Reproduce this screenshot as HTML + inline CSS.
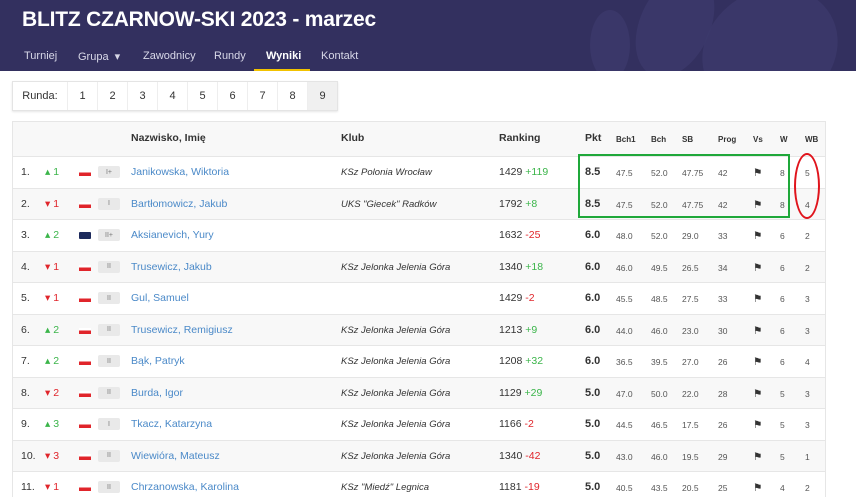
<!DOCTYPE html>
<html><head><meta charset="utf-8"><style>
*{margin:0;padding:0;box-sizing:border-box}
body{width:856px;height:497px;overflow:hidden;background:#fff;font-family:"Liberation Sans",sans-serif;color:#333;position:relative}
.hdr{position:absolute;left:0;top:0;width:856px;height:71px;background:#33305f;overflow:hidden}
.blob{position:absolute;border-radius:50%;background:#3c3a6c;opacity:.8}
.title{position:absolute;left:22px;top:8px;color:#fff;font-size:21px;font-weight:bold;letter-spacing:-.2px}
.nav{position:absolute;top:50px;color:#d8d8e8;font-size:11px}
.nav.a{color:#fff;font-weight:bold}
.ul{position:absolute;left:254px;top:69px;width:56px;height:2px;background:#f2c200}
.runda{position:absolute;left:12px;top:81px;height:30px;border:1px solid #e4e4e4;box-shadow:0 1px 2px rgba(0,0,0,.1);display:flex;font-size:11px}
.runda div{width:30px;border-left:1px solid #eee;text-align:center;line-height:28px}
.runda div:first-child{width:54px;border:none}
.tbl{position:absolute;left:12px;top:121px;width:814px;height:376px;border:1px solid #e6e6e6;border-bottom:none}
.row{position:absolute;left:0;width:812px;height:31.5px;border-top:1px solid #e6e6e6;font-size:10.5px}
.row.g{background:#f8f8f8}
.row span{position:absolute;top:9px;white-space:nowrap}
.h{background:#f8f8f8;height:34px;border:none;font-weight:bold;font-size:10.5px}
.h span{top:10px}
.h .s{font-size:8px;top:13px}
.up{color:#3bb54a}.dn{color:#e0252b}
.fl{width:12px;height:6px;top:13px!important;background:linear-gradient(#fff 40%,#e0252b 40%)}
.by{width:12px;height:7px;top:12px!important;background:#1d2a5c;border-radius:1px}
.row .bd{width:22px;height:12px;top:9px;background:#e9e9e9;border-radius:2px;font-size:7px;color:#777;display:flex;align-items:center;justify-content:center;line-height:1}
.nm{color:#4a89c8}
.cl{font-style:italic;font-size:9.5px!important;top:10px!important}
.pk{font-weight:bold;font-size:11px}
.sm{font-size:8.5px!important;color:#555;top:11px!important}
.flag{width:8px;height:8px;top:10px!important}
</style></head><body>
<div class="hdr">
<div class="blob" style="left:640px;top:-30px;width:70px;height:110px;transform:rotate(25deg)"></div>
<div class="blob" style="left:700px;top:-10px;width:140px;height:120px;transform:rotate(-30deg)"></div>
<div class="blob" style="left:590px;top:10px;width:40px;height:70px"></div>
<div class="title">BLITZ CZARNOW-SKI 2023 - marzec</div>
<span class="nav" style="left:24px">Turniej</span>
<span class="nav" style="left:78px">Grupa &nbsp;▾</span>
<span class="nav" style="left:143px">Zawodnicy</span>
<span class="nav" style="left:214px">Rundy</span>
<span class="nav a" style="left:266px">Wyniki</span>
<span class="nav" style="left:321px">Kontakt</span>
<div class="ul"></div>
</div>
<div class="runda"><div>Runda:</div><div>1</div><div>2</div><div>3</div><div>4</div><div>5</div><div>6</div><div>7</div><div>8</div><div style="background:#f0f0f0">9</div></div>
<div class="tbl">
<div class="row h" style="top:0"><span style="left:118px">Nazwisko, Imię</span><span style="left:328px">Klub</span><span style="left:486px">Ranking</span><span style="left:572px">Pkt</span><span class="s" style="left:603px">Bch1</span><span class="s" style="left:638px">Bch</span><span class="s" style="left:669px">SB</span><span class="s" style="left:705px">Prog</span><span class="s" style="left:740px">Vs</span><span class="s" style="left:767px">W</span><span class="s" style="left:792px">WB</span></div>

<div class="row" style="top:34px"><span style="left:8px">1.</span><span class="up" style="left:32px">▴ 1</span><span class="fl" style="left:66px"></span><span class="bd" style="left:85px">I+</span><span class="nm" style="left:118px">Janikowska, Wiktoria</span><span class="cl" style="left:328px">KSz Polonia Wrocław</span><span style="left:486px">1429 <b class="up" style="font-weight:normal">+119</b></span><span class="pk" style="left:572px">8.5</span><span class="sm" style="left:603px">47.5</span><span class="sm" style="left:638px">52.0</span><span class="sm" style="left:669px">47.75</span><span class="sm" style="left:705px">42</span><span class="flag" style="left:740px">⚑</span><span class="sm" style="left:767px">8</span><span class="sm" style="left:792px">5</span></div>
<div class="row g" style="top:65.5px"><span style="left:8px">2.</span><span class="dn" style="left:32px">▾ 1</span><span class="fl" style="left:66px"></span><span class="bd" style="left:85px">I</span><span class="nm" style="left:118px">Bartłomowicz, Jakub</span><span class="cl" style="left:328px">UKS "Giecek" Radków</span><span style="left:486px">1792 <b class="up" style="font-weight:normal">+8</b></span><span class="pk" style="left:572px">8.5</span><span class="sm" style="left:603px">47.5</span><span class="sm" style="left:638px">52.0</span><span class="sm" style="left:669px">47.75</span><span class="sm" style="left:705px">42</span><span class="flag" style="left:740px">⚑</span><span class="sm" style="left:767px">8</span><span class="sm" style="left:792px">4</span></div>
<div class="row" style="top:97px"><span style="left:8px">3.</span><span class="up" style="left:32px">▴ 2</span><span class="by" style="left:66px"></span><span class="bd" style="left:85px">II+</span><span class="nm" style="left:118px">Aksianevich, Yury</span><span style="left:486px">1632 <b class="dn" style="font-weight:normal">-25</b></span><span class="pk" style="left:572px">6.0</span><span class="sm" style="left:603px">48.0</span><span class="sm" style="left:638px">52.0</span><span class="sm" style="left:669px">29.0</span><span class="sm" style="left:705px">33</span><span class="flag" style="left:740px">⚑</span><span class="sm" style="left:767px">6</span><span class="sm" style="left:792px">2</span></div>
<div class="row g" style="top:128.5px"><span style="left:8px">4.</span><span class="dn" style="left:32px">▾ 1</span><span class="fl" style="left:66px"></span><span class="bd" style="left:85px">II</span><span class="nm" style="left:118px">Trusewicz, Jakub</span><span class="cl" style="left:328px">KSz Jelonka Jelenia Góra</span><span style="left:486px">1340 <b class="up" style="font-weight:normal">+18</b></span><span class="pk" style="left:572px">6.0</span><span class="sm" style="left:603px">46.0</span><span class="sm" style="left:638px">49.5</span><span class="sm" style="left:669px">26.5</span><span class="sm" style="left:705px">34</span><span class="flag" style="left:740px">⚑</span><span class="sm" style="left:767px">6</span><span class="sm" style="left:792px">2</span></div>
<div class="row" style="top:160px"><span style="left:8px">5.</span><span class="dn" style="left:32px">▾ 1</span><span class="fl" style="left:66px"></span><span class="bd" style="left:85px">II</span><span class="nm" style="left:118px">Gul, Samuel</span><span style="left:486px">1429 <b class="dn" style="font-weight:normal">-2</b></span><span class="pk" style="left:572px">6.0</span><span class="sm" style="left:603px">45.5</span><span class="sm" style="left:638px">48.5</span><span class="sm" style="left:669px">27.5</span><span class="sm" style="left:705px">33</span><span class="flag" style="left:740px">⚑</span><span class="sm" style="left:767px">6</span><span class="sm" style="left:792px">3</span></div>
<div class="row g" style="top:191.5px"><span style="left:8px">6.</span><span class="up" style="left:32px">▴ 2</span><span class="fl" style="left:66px"></span><span class="bd" style="left:85px">II</span><span class="nm" style="left:118px">Trusewicz, Remigiusz</span><span class="cl" style="left:328px">KSz Jelonka Jelenia Góra</span><span style="left:486px">1213 <b class="up" style="font-weight:normal">+9</b></span><span class="pk" style="left:572px">6.0</span><span class="sm" style="left:603px">44.0</span><span class="sm" style="left:638px">46.0</span><span class="sm" style="left:669px">23.0</span><span class="sm" style="left:705px">30</span><span class="flag" style="left:740px">⚑</span><span class="sm" style="left:767px">6</span><span class="sm" style="left:792px">3</span></div>
<div class="row" style="top:223px"><span style="left:8px">7.</span><span class="up" style="left:32px">▴ 2</span><span class="fl" style="left:66px"></span><span class="bd" style="left:85px">II</span><span class="nm" style="left:118px">Bąk, Patryk</span><span class="cl" style="left:328px">KSz Jelonka Jelenia Góra</span><span style="left:486px">1208 <b class="up" style="font-weight:normal">+32</b></span><span class="pk" style="left:572px">6.0</span><span class="sm" style="left:603px">36.5</span><span class="sm" style="left:638px">39.5</span><span class="sm" style="left:669px">27.0</span><span class="sm" style="left:705px">26</span><span class="flag" style="left:740px">⚑</span><span class="sm" style="left:767px">6</span><span class="sm" style="left:792px">4</span></div>
<div class="row g" style="top:254.5px"><span style="left:8px">8.</span><span class="dn" style="left:32px">▾ 2</span><span class="fl" style="left:66px"></span><span class="bd" style="left:85px">II</span><span class="nm" style="left:118px">Burda, Igor</span><span class="cl" style="left:328px">KSz Jelonka Jelenia Góra</span><span style="left:486px">1129 <b class="up" style="font-weight:normal">+29</b></span><span class="pk" style="left:572px">5.0</span><span class="sm" style="left:603px">47.0</span><span class="sm" style="left:638px">50.0</span><span class="sm" style="left:669px">22.0</span><span class="sm" style="left:705px">28</span><span class="flag" style="left:740px">⚑</span><span class="sm" style="left:767px">5</span><span class="sm" style="left:792px">3</span></div>
<div class="row" style="top:286px"><span style="left:8px">9.</span><span class="up" style="left:32px">▴ 3</span><span class="fl" style="left:66px"></span><span class="bd" style="left:85px">I</span><span class="nm" style="left:118px">Tkacz, Katarzyna</span><span class="cl" style="left:328px">KSz Jelonka Jelenia Góra</span><span style="left:486px">1166 <b class="dn" style="font-weight:normal">-2</b></span><span class="pk" style="left:572px">5.0</span><span class="sm" style="left:603px">44.5</span><span class="sm" style="left:638px">46.5</span><span class="sm" style="left:669px">17.5</span><span class="sm" style="left:705px">26</span><span class="flag" style="left:740px">⚑</span><span class="sm" style="left:767px">5</span><span class="sm" style="left:792px">3</span></div>
<div class="row g" style="top:317.5px"><span style="left:8px">10.</span><span class="dn" style="left:32px">▾ 3</span><span class="fl" style="left:66px"></span><span class="bd" style="left:85px">II</span><span class="nm" style="left:118px">Wiewióra, Mateusz</span><span class="cl" style="left:328px">KSz Jelonka Jelenia Góra</span><span style="left:486px">1340 <b class="dn" style="font-weight:normal">-42</b></span><span class="pk" style="left:572px">5.0</span><span class="sm" style="left:603px">43.0</span><span class="sm" style="left:638px">46.0</span><span class="sm" style="left:669px">19.5</span><span class="sm" style="left:705px">29</span><span class="flag" style="left:740px">⚑</span><span class="sm" style="left:767px">5</span><span class="sm" style="left:792px">1</span></div>
<div class="row" style="top:349px"><span style="left:8px">11.</span><span class="dn" style="left:32px">▾ 1</span><span class="fl" style="left:66px"></span><span class="bd" style="left:85px">II</span><span class="nm" style="left:118px">Chrzanowska, Karolina</span><span class="cl" style="left:328px">KSz "Miedź" Legnica</span><span style="left:486px">1181 <b class="dn" style="font-weight:normal">-19</b></span><span class="pk" style="left:572px">5.0</span><span class="sm" style="left:603px">40.5</span><span class="sm" style="left:638px">43.5</span><span class="sm" style="left:669px">20.5</span><span class="sm" style="left:705px">25</span><span class="flag" style="left:740px">⚑</span><span class="sm" style="left:767px">4</span><span class="sm" style="left:792px">2</span></div>
</div>
<div style="position:absolute;left:578px;top:154px;width:212px;height:64px;border:2px solid #1fa83a"></div>
<div style="position:absolute;left:794px;top:153px;width:26px;height:66px;border:2px solid #e0141c;border-radius:50%"></div>
</body></html>
